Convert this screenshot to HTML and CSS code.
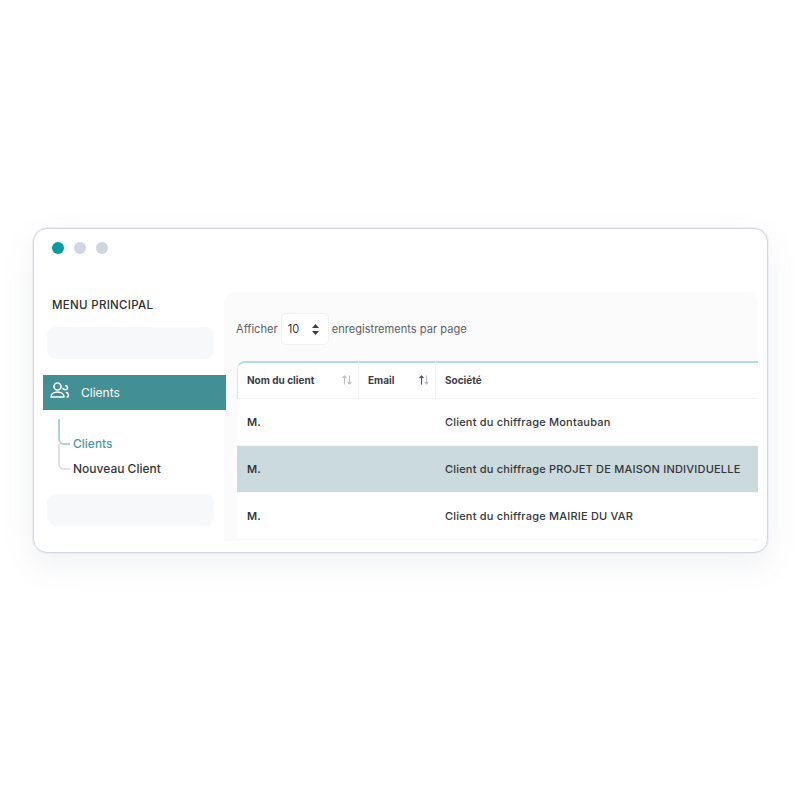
FILE: index.html
```html
<!DOCTYPE html>
<html lang="fr">
  <head>
    <meta charset="utf-8">
    <title>Clients</title>
    <link rel="stylesheet" href="styles.css">
  </head>
  <body>
    <div class="window">
      <div class="dots">
        <span class="dot dot-on"></span>
        <span class="dot"></span>
        <span class="dot"></span>
      </div>
      <div class="content">
        <aside class="sidebar">
          <h2 class="menu-title">MENU PRINCIPAL</h2>
          <div class="placeholder"></div>
          <div class="menu-active">
            <svg class="menu-icon" width="20" height="18" viewBox="0 0 20 18" fill="none" stroke="#fff" stroke-width="1.6" stroke-linecap="round" stroke-linejoin="round">
              <circle cx="7.500" cy="4.500" r="3.500"/>
              <path d="M1 15c0-3 2.800-5 6.500-5s6.500 2 6.500 5z"/>
              <path d="M13 6.500c1 1.300 3 1.600 4 .5 1-1.200.4-3-1.200-3.300"/>
              <path d="M16.500 10.500c1.300.4 2 1.700 2 3.200 0 .8-.6 1.300-1.400 1.300"/>
            </svg>
            <span>Clients</span>
          </div>
          <ul class="submenu">
            <li class="sub-item sub-active">Clients</li>
            <li class="sub-item">Nouveau Client</li>
          </ul>
          <div class="placeholder"></div>
        </aside>
        <main class="main">
          <div class="length">
            <span>Afficher</span>
            <div class="select">
              <span>10</span>
              <svg width="7" height="11" viewBox="0 0 7 11" fill="#3a3f47"><path d="M3.500 0 7 4H0z"/><path d="M3.500 11 0 7h7z"/></svg>
            </div>
            <span>enregistrements par page</span>
          </div>
          <table class="clients">
            <thead>
              <tr>
                <th class="col-name">
                  <div class="th-in">Nom du client
                    <svg class="sort" width="10" height="10" viewBox="0 0 10 10" fill="none" stroke-width="1.1"><path class="off" d="M2.500 9.500V1M.6 3 2.500 1l1.900 2"/><path class="off" d="M7.500.5V9M5.600 7l1.900 2 1.900-2"/></svg>
                  </div>
                </th>
                <th class="col-email">
                  <div class="th-in">Email
                    <svg class="sort" width="10" height="10" viewBox="0 0 10 10" fill="none" stroke-width="1.1"><path class="on" d="M2.500 9.500V1M.6 3 2.500 1l1.900 2"/><path class="off" d="M7.500.5V9M5.600 7l1.900 2 1.900-2"/></svg>
                  </div>
                </th>
                <th>Société</th>
              </tr>
            </thead>
            <tbody>
              <tr>
                <td class="civ">M.</td>
                <td></td>
                <td>Client du chiffrage Montauban</td>
              </tr>
              <tr class="selected">
                <td class="civ">M.</td>
                <td></td>
                <td>Client du chiffrage PROJET DE MAISON INDIVIDUELLE</td>
              </tr>
              <tr>
                <td class="civ">M.</td>
                <td></td>
                <td>Client du chiffrage MAIRIE DU VAR</td>
              </tr>
            </tbody>
          </table>
        </main>
      </div>
    </div>
  </body>
</html>
```

FILE: styles.css
```css
body {
  margin: 0;
  height: 800px;
  background: #fff;
  font-family: "Inter", "Liberation Sans", sans-serif;
  color: #33363b;
  overflow: hidden;
}

.window {
  box-sizing: border-box;
  width: 735px;
  height: 325px;
  margin: 228px 0 0 33px;
  background: #fff;
  border: 1px solid #d3d6df;
  border-radius: 14px;
  box-shadow: 0 0 0 1px rgba(214, 217, 227, 0.35), 0 12px 34px rgba(90, 100, 130, 0.09);
  overflow: hidden;
}

.dots {
  display: flex;
  gap: 10px;
  padding: 13px 0 0 18px;
  height: 12px;
}

.dot {
  width: 12px;
  height: 12px;
  border-radius: 50%;
  background: #d0d5de;
}

.dot-on {
  background: #079ba0;
}

.content {
  display: flex;
  margin-top: 38px;
}

.sidebar {
  width: 190px;
  flex: none;
}

.menu-title {
  margin: 1px 0 10px 18px;
  font-size: 11.5px;
  line-height: 24px;
  font-weight: 500;
  letter-spacing: 0.3px;
  color: #2c2e33;
}

.placeholder {
  height: 32px;
  margin-left: 13px;
  width: 167px;
  background: #f7f8fa;
  border-radius: 9px;
}

.menu-active {
  position: relative;
  display: flex;
  align-items: center;
  gap: 11px;
  height: 35px;
  margin: 16px -2px 0 9px;
  padding-left: 7px;
  background: #438f96;
  color: #fff;
  font-size: 12px;
}

.menu-icon {
  margin-top: -4px;
}

.submenu {
  list-style: none;
  margin: 0 0 13px;
  padding: 21px 0 0 39px;
  font-size: 12px;
}

.sub-item {
  position: relative;
  height: 25px;
  line-height: 25px;
  font-weight: 500;
  color: #33363b;
}

.sub-item::before {
  content: "";
  position: absolute;
  left: -15px;
  bottom: 11px;
  width: 10px;
  height: 24px;
  border-left: 2px solid #e0e2e6;
  border-bottom: 2px solid #e0e2e6;
  border-bottom-left-radius: 6px;
}

.sub-active {
  color: #4b9aa1;
}

.sub-active::before {
  border-color: #a9d4d8;
}

.main {
  flex: 1;
  height: 249px;
  margin-right: 9px;
  padding-left: 12px;
  background: #fbfbfb;
  border-radius: 12px 12px 0 0;
  overflow: hidden;
}

.length {
  display: flex;
  align-items: center;
  gap: 3px;
  height: 32px;
  margin-top: 21px;
  font-size: 11.1px;
  color: #5d6066;
}

.select {
  display: flex;
  align-items: center;
  justify-content: space-between;
  box-sizing: border-box;
  width: 48px;
  height: 32px;
  padding: 0 9px 0 6px;
  background: #fff;
  border: 1px solid #f0f0f2;
  border-radius: 5px;
  color: #33363b;
}

.clients {
  width: 521px;
  margin: 16px 0 0 1px;
  border-collapse: separate;
  border-spacing: 0;
  table-layout: fixed;
  font-size: 11px;
}

.clients thead tr {
  height: 38px;
}

.clients th {
  padding: 0 6px 2px 9px;
  text-align: left;
  font-size: 10px;
  font-weight: 700;
  color: #3b3e44;
  background: #fff;
  border-top: 2px solid #b0dde0;
  border-bottom: 1px solid #f2f2f4;
  border-right: 1px solid #f4f4f6;
}

.clients th:first-child {
  border-left: 1px solid #cfeaec;
  border-top-left-radius: 8px;
}

.clients th:last-child {
  border-right: none;
}

.col-name {
  width: 122px;
  box-sizing: border-box;
}

.col-email {
  width: 77px;
  box-sizing: border-box;
}

.th-in {
  display: flex;
  align-items: center;
  justify-content: space-between;
}

.sort .off {
  stroke: #b9bdc3;
}

.sort .on {
  stroke: #4b4e54;
}

.clients td {
  height: 46px;
  padding: 0 9px;
  font-weight: 500;
  letter-spacing: 0.2px;
  color: #33363b;
  background: #fff;
  border-bottom: 1px solid #f6f6f8;
}

.clients .civ {
  padding-left: 10px;
  font-weight: 600;
}

.selected td {
  background: #cbdadc;
}
```
